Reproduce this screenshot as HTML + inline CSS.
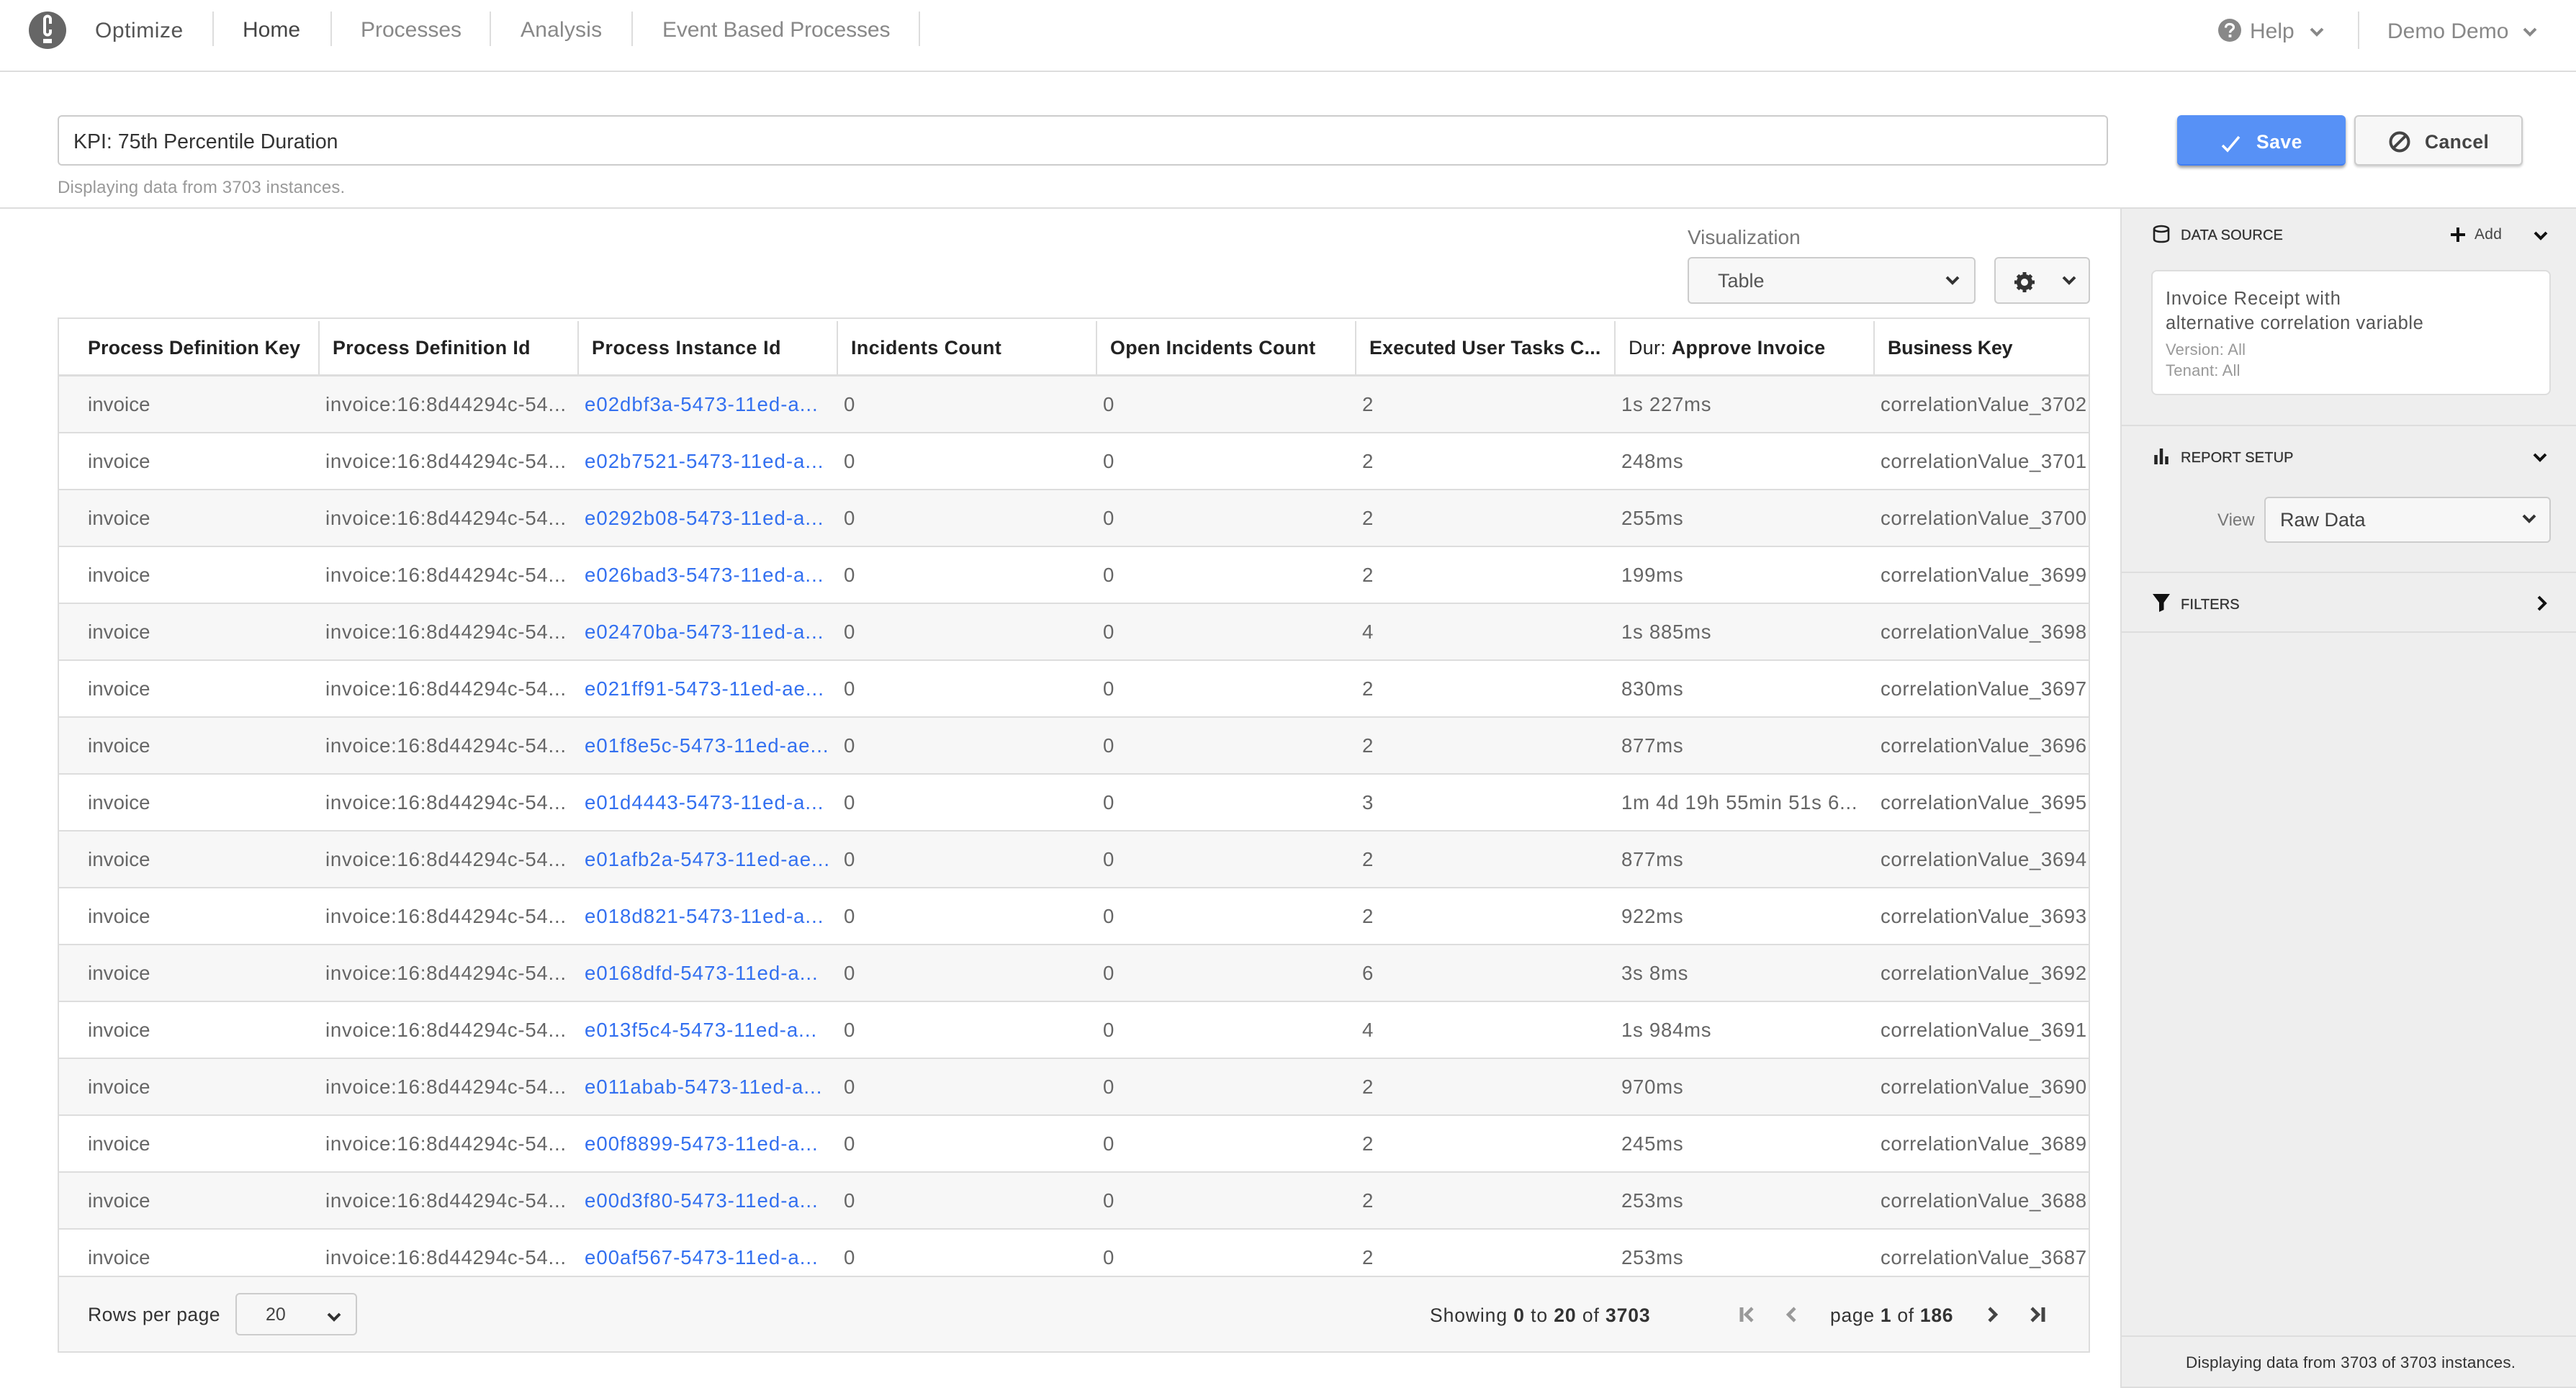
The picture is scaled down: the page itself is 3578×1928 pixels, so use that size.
<!DOCTYPE html>
<html><head><meta charset="utf-8"><title>Optimize</title>
<style>
html,body{margin:0;padding:0;width:3578px;height:1928px;overflow:hidden;background:#fff;font-family:"Liberation Sans",sans-serif;color:#666}
.a{position:absolute}
.t{position:absolute;white-space:nowrap;line-height:40px}
.l{position:absolute;background:#ddd}
svg{position:absolute;overflow:visible}
.box{position:absolute;box-sizing:border-box;border:2px solid #ccc;border-radius:6px;background:#f7f7f7}
.nav{font-size:30px;color:#888;top:22px}
.sep{position:absolute;top:16px;height:48px;width:2px;background:#ddd}
.hd{position:absolute;top:443px;left:80px;width:2823px;height:79px}
.hd b,.hd span{position:absolute;top:20px;line-height:40px;font-size:26.8px;color:#222;white-space:nowrap}
.hd span{font-weight:400}
.hd i{position:absolute;top:3px;height:74px;width:2px;background:#ddd}
.r{position:absolute;left:82px;width:2819px;height:77px;border-bottom:2px solid #ddd}
.g{background:#f7f7f7}
.r span{position:absolute;top:19px;line-height:40px;font-size:27.6px;color:#666;white-space:nowrap}
.r span:nth-child(1){left:40px;letter-spacing:.1px}
.r span:nth-child(2){left:370px;letter-spacing:.75px}
.r span:nth-child(3){left:730px;color:#3370f0;letter-spacing:1px}
.r span:nth-child(4){left:1090px}
.r span:nth-child(5){left:1450px}
.r span:nth-child(6){left:1810px}
.r span:nth-child(7){left:2170px;letter-spacing:.7px}
.r span:nth-child(8){left:2530px;letter-spacing:.6px}
.sh{font-size:20px;color:#333;-webkit-text-stroke:.3px #333;letter-spacing:.15px}
.ch{fill:none;stroke-width:4;stroke-linecap:square}
</style></head><body>
<svg width="0" height="0" style="position:absolute"><defs>
<symbol id="d" viewBox="0 0 20 12" overflow="visible"><path d="M2 2L10 10L18 2" fill="none" stroke="currentColor" stroke-width="4"/></symbol>
</defs></svg>

<!-- header -->
<div class="l" style="left:0;top:98px;width:3578px;height:2px"></div>
<svg style="left:40px;top:16px" width="52" height="52" viewBox="0 0 52 52"><circle cx="26" cy="26" r="26" fill="#666"/><path d="M30 17V10.500A4 4 0 0 0 22 10.500V28.500A4 4 0 0 0 30 28.500V25" fill="none" stroke="#fff" stroke-width="4"/><rect x="20" y="38" width="12" height="6" fill="#fff"/></svg>
<div class="t nav" style="left:132px;color:#555;top:23px;letter-spacing:.55px">Optimize</div>
<div class="sep" style="left:295px"></div>
<div class="t nav" style="left:337px;color:#444">Home</div>
<div class="sep" style="left:459px"></div>
<div class="t nav" style="left:501px">Processes</div>
<div class="sep" style="left:680px"></div>
<div class="t nav" style="left:723px;letter-spacing:.2px">Analysis</div>
<div class="sep" style="left:877px"></div>
<div class="t nav" style="left:920px;letter-spacing:-.1px">Event Based Processes</div>
<div class="sep" style="left:1276px"></div>

<svg style="left:3081px;top:26px" width="32" height="32" viewBox="0 0 32 32"><circle cx="16" cy="16" r="16" fill="#888"/><path d="M10.500 12.500C10.500 9 13 7.500 16 7.500C19 7.500 21.500 9.200 21.500 12C21.500 15.500 16.500 15.500 16.500 19.500" fill="none" stroke="#fff" stroke-width="3.200"/><rect x="14.600" y="22" width="3.800" height="3.800" fill="#fff"/></svg>
<div class="t" style="left:3125px;top:24px;font-size:30px;color:#888">Help</div>
<svg style="left:3208px;top:38px;color:#888" width="20" height="12"><use href="#d"/></svg>
<div class="sep" style="left:3275px;height:52px"></div>
<div class="t" style="left:3316px;top:24px;font-size:30px;color:#888">Demo Demo</div>
<svg style="left:3504px;top:38px;color:#888" width="20" height="12"><use href="#d"/></svg>

<!-- name row -->
<div class="box" style="left:80px;top:160px;width:2848px;height:70px;background:#fff"></div>
<div class="t" style="left:102px;top:177px;font-size:28.500px;color:#333">KPI: 75th Percentile Duration</div>
<div class="t" style="left:80px;top:241px;font-size:24px;color:#999;letter-spacing:.16px">Displaying data from 3703 instances.</div>
<div class="a" style="left:3024px;top:160px;width:234px;height:70px;background:#5791f6;border-bottom:2px solid #3f7df3;box-sizing:border-box;border-radius:6px;box-shadow:0 3px 4px rgba(0,0,0,.4)"></div>
<svg style="left:3085px;top:188px" width="28" height="24" viewBox="0 0 28 24"><path d="M2 14L9 21L25 2" fill="none" stroke="#fff" stroke-width="3.500"/></svg>
<div class="t" style="left:3134px;top:177px;font-size:26.500px;font-weight:700;color:#fff;letter-spacing:.5px">Save</div>
<div class="box" style="left:3270px;top:160px;width:234px;height:70px;box-shadow:0 2px 3px rgba(0,0,0,.2)"></div>
<svg style="left:3318px;top:182px" width="30" height="30" viewBox="0 0 30 30"><circle cx="15" cy="15" r="12.500" fill="none" stroke="#444" stroke-width="4"/><path d="M7 23L23 7" stroke="#444" stroke-width="4"/></svg>
<div class="t" style="left:3368px;top:177px;font-size:26.500px;font-weight:700;color:#444;letter-spacing:.4px">Cancel</div>
<div class="l" style="left:0;top:288px;width:3578px;height:2px"></div>

<!-- visualization -->
<div class="t" style="left:2344px;top:310px;font-size:28px;color:#777">Visualization</div>
<div class="box" style="left:2344px;top:357px;width:400px;height:65px"></div>
<div class="t" style="left:2386px;top:370px;font-size:27px;color:#555">Table</div>
<svg style="left:2702px;top:383px;color:#333" width="20" height="12"><use href="#d"/></svg>
<div class="box" style="left:2770px;top:357px;width:133px;height:65px"></div>
<svg style="left:2797px;top:377px" width="30" height="30" viewBox="0 0 30 30"><g stroke="#333" stroke-width="5"><path d="M15 1V29M1 15H29M5.500 5.500L24.500 24.500M24.500 5.500L5.500 24.500"/></g><circle cx="15" cy="15" r="8" fill="#f7f7f7" stroke="#333" stroke-width="6"/></svg>
<svg style="left:2864px;top:383px;color:#333" width="20" height="12"><use href="#d"/></svg>

<!-- table -->
<div class="a" style="left:80px;top:441px;width:2823px;height:1438px;box-sizing:border-box;border:2px solid #ddd;border-bottom:0"></div>
<div class="hd">
<b style="left:42px;letter-spacing:.15px">Process Definition Key</b><i style="left:362px"></i>
<b style="left:382px;letter-spacing:.4px">Process Definition Id</b><i style="left:722px"></i>
<b style="left:742px;letter-spacing:.6px">Process Instance Id</b><i style="left:1082px"></i>
<b style="left:1102px;letter-spacing:.45px">Incidents Count</b><i style="left:1442px"></i>
<b style="left:1462px;letter-spacing:.35px">Open Incidents Count</b><i style="left:1802px"></i>
<b style="left:1822px;letter-spacing:.2px">Executed User Tasks C...</b><i style="left:2162px"></i>
<span style="left:2182px;letter-spacing:.35px">Dur: <b style="position:static">Approve Invoice</b></span><i style="left:2522px"></i>
<b style="left:2542px;letter-spacing:-.2px">Business Key</b>
</div>
<div class="l" style="left:80px;top:520px;width:2823px;height:3px"></div>

<div class="r g" style="top:523px"><span>invoice</span><span>invoice:16:8d44294c-54...</span><span>e02dbf3a-5473-11ed-a...</span><span>0</span><span>0</span><span>2</span><span>1s 227ms</span><span>correlationValue_3702</span></div>
<div class="r" style="top:602px"><span>invoice</span><span>invoice:16:8d44294c-54...</span><span>e02b7521-5473-11ed-a...</span><span>0</span><span>0</span><span>2</span><span>248ms</span><span>correlationValue_3701</span></div>
<div class="r g" style="top:681px"><span>invoice</span><span>invoice:16:8d44294c-54...</span><span>e0292b08-5473-11ed-a...</span><span>0</span><span>0</span><span>2</span><span>255ms</span><span>correlationValue_3700</span></div>
<div class="r" style="top:760px"><span>invoice</span><span>invoice:16:8d44294c-54...</span><span>e026bad3-5473-11ed-a...</span><span>0</span><span>0</span><span>2</span><span>199ms</span><span>correlationValue_3699</span></div>
<div class="r g" style="top:839px"><span>invoice</span><span>invoice:16:8d44294c-54...</span><span>e02470ba-5473-11ed-a...</span><span>0</span><span>0</span><span>4</span><span>1s 885ms</span><span>correlationValue_3698</span></div>
<div class="r" style="top:918px"><span>invoice</span><span>invoice:16:8d44294c-54...</span><span>e021ff91-5473-11ed-ae...</span><span>0</span><span>0</span><span>2</span><span>830ms</span><span>correlationValue_3697</span></div>
<div class="r g" style="top:997px"><span>invoice</span><span>invoice:16:8d44294c-54...</span><span>e01f8e5c-5473-11ed-ae...</span><span>0</span><span>0</span><span>2</span><span>877ms</span><span>correlationValue_3696</span></div>
<div class="r" style="top:1076px"><span>invoice</span><span>invoice:16:8d44294c-54...</span><span>e01d4443-5473-11ed-a...</span><span>0</span><span>0</span><span>3</span><span>1m 4d 19h 55min 51s 6...</span><span>correlationValue_3695</span></div>
<div class="r g" style="top:1155px"><span>invoice</span><span>invoice:16:8d44294c-54...</span><span>e01afb2a-5473-11ed-ae...</span><span>0</span><span>0</span><span>2</span><span>877ms</span><span>correlationValue_3694</span></div>
<div class="r" style="top:1234px"><span>invoice</span><span>invoice:16:8d44294c-54...</span><span>e018d821-5473-11ed-a...</span><span>0</span><span>0</span><span>2</span><span>922ms</span><span>correlationValue_3693</span></div>
<div class="r g" style="top:1313px"><span>invoice</span><span>invoice:16:8d44294c-54...</span><span>e0168dfd-5473-11ed-a...</span><span>0</span><span>0</span><span>6</span><span>3s 8ms</span><span>correlationValue_3692</span></div>
<div class="r" style="top:1392px"><span>invoice</span><span>invoice:16:8d44294c-54...</span><span>e013f5c4-5473-11ed-a...</span><span>0</span><span>0</span><span>4</span><span>1s 984ms</span><span>correlationValue_3691</span></div>
<div class="r g" style="top:1471px"><span>invoice</span><span>invoice:16:8d44294c-54...</span><span>e011abab-5473-11ed-a...</span><span>0</span><span>0</span><span>2</span><span>970ms</span><span>correlationValue_3690</span></div>
<div class="r" style="top:1550px"><span>invoice</span><span>invoice:16:8d44294c-54...</span><span>e00f8899-5473-11ed-a...</span><span>0</span><span>0</span><span>2</span><span>245ms</span><span>correlationValue_3689</span></div>
<div class="r g" style="top:1629px"><span>invoice</span><span>invoice:16:8d44294c-54...</span><span>e00d3f80-5473-11ed-a...</span><span>0</span><span>0</span><span>2</span><span>253ms</span><span>correlationValue_3688</span></div>
<div class="r" style="top:1708px;height:64px;border-bottom:0"><span>invoice</span><span>invoice:16:8d44294c-54...</span><span>e00af567-5473-11ed-a...</span><span>0</span><span>0</span><span>2</span><span>253ms</span><span>correlationValue_3687</span></div>

<!-- footer -->
<div class="a" style="left:80px;top:1772px;width:2823px;height:107px;box-sizing:border-box;background:#f7f7f7;border:2px solid #ddd"></div>
<div class="t" style="left:122px;top:1806px;font-size:26.500px;color:#333;letter-spacing:.44px">Rows per page</div>
<div class="box" style="left:327px;top:1796px;width:169px;height:59px"></div>
<div class="t" style="left:369px;top:1806px;font-size:25px;color:#444">20</div>
<svg style="left:454px;top:1823px;color:#333" width="20" height="12"><use href="#d"/></svg>
<div class="t" style="left:1986px;top:1807px;font-size:26.500px;color:#333;letter-spacing:.9px">Showing <b>0</b> to <b>20</b> of <b>3703</b></div>
<svg style="left:2416px;top:1814px" width="22" height="24" viewBox="0 0 22 24"><path d="M3 2V22" stroke="#999" stroke-width="5" fill="none"/><path d="M18 3L9 12L18 21" stroke="#999" stroke-width="4.500" fill="none"/></svg>
<svg style="left:2480px;top:1814px" width="16" height="24" viewBox="0 0 16 24"><path d="M13 3L4 12L13 21" stroke="#999" stroke-width="4.500" fill="none"/></svg>
<div class="t" style="left:2542px;top:1807px;font-size:26.500px;color:#333;letter-spacing:.7px">page <b>1</b> of <b>186</b></div>
<svg style="left:2760px;top:1814px" width="16" height="24" viewBox="0 0 16 24"><path d="M3 3L12 12L3 21" stroke="#444" stroke-width="4.500" fill="none"/></svg>
<svg style="left:2819px;top:1814px" width="22" height="24" viewBox="0 0 22 24"><path d="M3 3L12 12L3 21" stroke="#444" stroke-width="4.500" fill="none"/><path d="M19 2V22" stroke="#444" stroke-width="5" fill="none"/></svg>

<!-- sidebar -->
<div class="a" style="left:2945px;top:290px;width:633px;height:1638px;background:#eee;border-left:2px solid #ddd;box-sizing:border-box"></div>
<svg style="left:2990px;top:312px" width="24" height="26" viewBox="0 0 24 26"><ellipse cx="12" cy="6" rx="10" ry="4" fill="none" stroke="#222" stroke-width="2.600"/><path d="M2 6V20C2 23 6 24 12 24C18 24 22 23 22 20V6" fill="none" stroke="#222" stroke-width="2.600"/></svg>
<div class="t sh" style="left:3029px;top:307px">DATA SOURCE</div>
<svg style="left:3404px;top:316px" width="20" height="20" viewBox="0 0 20 20"><path d="M10 0V20M0 10H20" stroke="#111" stroke-width="4"/></svg>
<div class="t" style="left:3437px;top:306px;font-size:21px;color:#444;letter-spacing:.3px">Add</div>
<svg style="left:3519px;top:321px;color:#111" width="20" height="12"><use href="#d"/></svg>
<div class="a" style="left:2988px;top:375px;width:555px;height:174px;background:#fff;border:2px solid #ddd;border-radius:8px;box-sizing:border-box"></div>
<div class="t" style="left:3008px;top:395px;font-size:25.500px;color:#555;letter-spacing:.85px">Invoice Receipt with</div>
<div class="t" style="left:3008px;top:429px;font-size:25.500px;color:#555;letter-spacing:.57px">alternative correlation variable</div>
<div class="t" style="left:3008px;top:466px;font-size:22px;color:#999;letter-spacing:.2px">Version: All</div>
<div class="t" style="left:3008px;top:495px;font-size:22px;color:#999;letter-spacing:.2px">Tenant: All</div>
<div class="l" style="left:2947px;top:590px;width:631px;height:2px"></div>
<svg style="left:2992px;top:623px" width="20" height="22" viewBox="0 0 20 22"><path d="M2.500 9V22M10 0V22M17.500 11V22" stroke="#222" stroke-width="4.500"/></svg>
<div class="t sh" style="left:3029px;top:616px">REPORT SETUP</div>
<svg style="left:3518px;top:629px;color:#111" width="20" height="12"><use href="#d"/></svg>
<div class="t" style="left:3080px;top:703px;font-size:24px;color:#777">View</div>
<div class="box" style="left:3145px;top:690px;width:398px;height:64px"></div>
<div class="t" style="left:3167px;top:702px;font-size:27px;color:#444">Raw Data</div>
<svg style="left:3503px;top:714px;color:#333" width="20" height="12"><use href="#d"/></svg>
<div class="l" style="left:2947px;top:794px;width:631px;height:2px"></div>
<svg style="left:2990px;top:825px" width="24" height="25" viewBox="0 0 24 25"><path d="M0 0H24L15.500 12V22L9 25V12Z" fill="#111"/></svg>
<div class="t sh" style="left:3029px;top:820px">FILTERS</div>
<svg style="left:3524px;top:827px" width="14" height="22" viewBox="0 0 14 22"><path d="M2 2L11 11L2 20" fill="none" stroke="#111" stroke-width="4"/></svg>
<div class="l" style="left:2947px;top:877px;width:631px;height:2px"></div>
<div class="l" style="left:2947px;top:1855px;width:631px;height:2px"></div>
<div class="t" style="left:3036px;top:1873px;font-size:22.500px;color:#333;letter-spacing:.18px">Displaying data from 3703 of 3703 instances.</div>
<div class="l" style="left:2947px;top:1926px;width:631px;height:2px"></div>
</body></html>
